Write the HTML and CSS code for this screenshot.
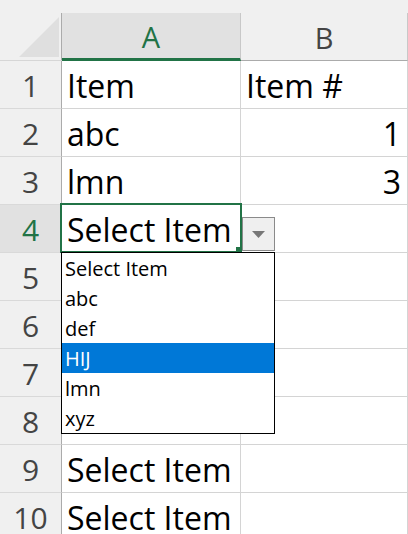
FILE: index.html
```html
<!DOCTYPE html>
<html>
<head>
<meta charset="utf-8">
<link rel="stylesheet" href="styles.css">
</head>
<body>
<div class="sheet">
  <div class="hdr-row">
    <div class="corner">
      <div class="corner-inner">
        <svg class="tri" width="40" height="40" viewBox="0 0 40 40"><polygon points="40,0 40,40 0,40" fill="#dfdfdf"/></svg>
      </div>
    </div>
    <div class="col-hdr col-sel">A</div>
    <div class="col-hdr">B</div>
  </div>
  <div class="row"><div class="rh">1</div><div class="cell">Item</div><div class="cell">Item #</div></div>
  <div class="row"><div class="rh">2</div><div class="cell">abc</div><div class="cell num">1</div></div>
  <div class="row"><div class="rh">3</div><div class="cell">lmn</div><div class="cell num">3</div></div>
  <div class="row"><div class="rh rh-sel">4</div><div class="cell">Select Item</div><div class="cell"></div></div>
  <div class="row"><div class="rh">5</div><div class="cell"></div><div class="cell"></div></div>
  <div class="row"><div class="rh">6</div><div class="cell"></div><div class="cell"></div></div>
  <div class="row"><div class="rh">7</div><div class="cell"></div><div class="cell"></div></div>
  <div class="row"><div class="rh">8</div><div class="cell"></div><div class="cell"></div></div>
  <div class="row"><div class="rh">9</div><div class="cell">Select Item</div><div class="cell"></div></div>
  <div class="row"><div class="rh">10</div><div class="cell">Select Item</div><div class="cell"></div></div>

  <div class="selection"></div>
  <div class="handle"></div>
  <div class="dd-btn">
    <svg width="13" height="7" viewBox="0 0 13 7"><polygon points="0,0 13,0 6.5,7" fill="#777"/></svg>
  </div>
  <ul class="dd-list">
    <li>Select Item</li>
    <li>abc</li>
    <li>def</li>
    <li class="active">HIJ</li>
    <li>lmn</li>
    <li>xyz</li>
  </ul>
</div>
</body>
</html>
```

FILE: styles.css
```css
html, body {
  margin: 0;
  padding: 0;
  background: #ffffff;
  overflow: hidden;
}

.sheet {
  position: relative;
  width: 408px;
  height: 534px;
  overflow: hidden;
  font-family: "Open Sans", "Noto Sans", sans-serif;
}

.hdr-row,
.row {
  display: grid;
  grid-template-columns: 62px 179px 1fr;
}

.hdr-row {
  height: 61px;
  background: #f0f0f0;
  align-items: end;
}

.corner {
  height: 61px;
  box-sizing: border-box;
  border-bottom: 1px solid #d6d6d6;
  display: flex;
  align-items: flex-end;
}

.corner-inner {
  width: 100%;
  height: 47px;
  box-sizing: border-box;
  border-right: 1px solid #ababab;
  display: flex;
  justify-content: flex-end;
  align-items: flex-end;
  padding: 0 2px 3px 0;
}

.tri {
  display: block;
}

.col-hdr {
  height: 48px;
  box-sizing: border-box;
  border-bottom: 1px solid #ababab;
  border-right: 1px solid #c8c8c8;
  text-align: center;
  font-size: 29px;
  line-height: 42px;
  padding-top: 4px;
  color: #444444;
}

.col-sel {
  background: #e1e1e1;
  color: #217346;
  border-bottom: 3px solid #217346;
  line-height: 40px;
}

.row {
  height: 48px;
}

.rh {
  box-sizing: border-box;
  background: #f0f0f0;
  border-right: 1px solid #ababab;
  border-bottom: 1px solid #d9d9d9;
  text-align: center;
  font-size: 30px;
  line-height: 44px;
  padding-top: 3px;
  color: #444444;
}

.rh-sel {
  background: #e1e1e1;
  color: #217346;
}

.cell {
  box-sizing: border-box;
  border-right: 1px solid #d4d4d4;
  border-bottom: 1px solid #d4d4d4;
  padding: 2px 6px 0 5px;
  font-size: 32px;
  line-height: 45px;
  color: #000000;
  white-space: nowrap;
  overflow: hidden;
}

.num {
  text-align: right;
}

.selection {
  position: absolute;
  left: 60px;
  top: 203px;
  width: 182px;
  height: 50px;
  box-sizing: border-box;
  border: 2px solid #217346;
}

.handle {
  position: absolute;
  left: 236px;
  top: 247px;
  width: 6px;
  height: 6px;
  background: #217346;
}

.dd-btn {
  position: absolute;
  left: 242px;
  top: 217px;
  width: 33px;
  height: 34px;
  box-sizing: border-box;
  background: #efefef;
  border: 1px solid #8a8a8a;
  display: flex;
  align-items: center;
  justify-content: center;
}

.dd-btn svg {
  display: block;
}

.dd-list {
  position: absolute;
  left: 61px;
  top: 252px;
  width: 214px;
  margin: 0;
  padding: 0;
  list-style: none;
  box-sizing: border-box;
  border: 1px solid #000000;
  background: #ffffff;
}

.dd-list li {
  height: 30px;
  padding-left: 3px;
  font-size: 20px;
  line-height: 31px;
  color: #000000;
  white-space: nowrap;
}

.dd-list li.active {
  background: #0078d7;
  color: #ffffff;
}
```
